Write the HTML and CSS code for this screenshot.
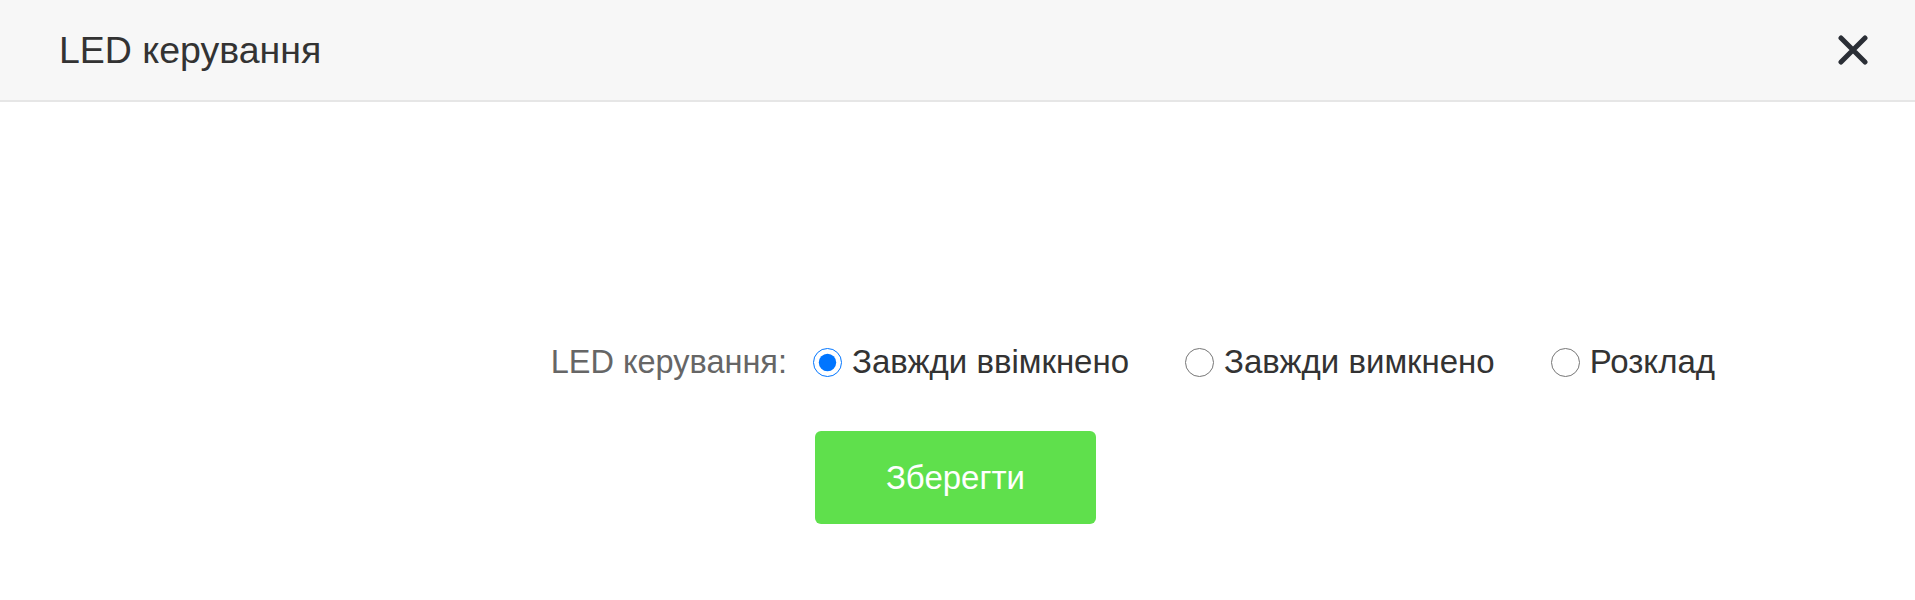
FILE: index.html
```html
<!DOCTYPE html>
<html lang="uk">
<head>
  <meta charset="UTF-8" />
  <title>LED керування</title>
  <link rel="stylesheet" href="styles.css">
</head>
<body>

  <!-- Kopfzeile des Dialogs -->
  <div class="dialog-head">
    <h2>LED керування</h2>
    <button class="close-btn" type="button" title="Закрити">
      <svg width="30" height="30" viewBox="0 0 30 30">
        <path d="M3 3 L27 27 M27 3 L3 27" stroke="#2b2f36" stroke-width="5" stroke-linecap="round" fill="none"/>
      </svg>
    </button>
  </div>

  <form class="led-form">
    <div class="form-row">
      <span class="form-label">LED керування:</span>
      <div class="options">
        <label class="option"><input type="radio" name="led" value="on" checked> Завжди ввімкнено</label>
        <label class="option"><input type="radio" name="led" value="off"> Завжди вимкнено</label>
        <label class="option"><input type="radio" name="led" value="schedule"> Розклад</label>
      </div>
    </div>

    <div class="form-row">
      <span></span>
      <button type="submit" class="save-btn">Зберегти</button>
    </div>
  </form>

</body>
</html>
```

FILE: styles.css
```css
body {
  margin: 0;
  font-family: "Liberation Sans", Arial, sans-serif;
  background: #fff;
  color: #333;
}
.dialog-head {
  height: 100px;
  display: flex;
  align-items: center;
  justify-content: space-between;
  padding: 0 47px 0 59px;
  background: #f7f7f7;
  border-bottom: 2px solid #e6e6e6;
}
.dialog-head h2 {
  margin: 0;
  font-size: 37.5px;
  font-weight: normal;
  color: #333;
}
.close-btn {
  background: none;
  border: none;
  padding: 0;
  cursor: pointer;
  display: flex;
}
.led-form {
  padding-top: 241px;
}
.form-row {
  display: grid;
  grid-template-columns: 787px auto;
  column-gap: 26px;
  align-items: center;
}
.form-label {
  text-align: right;
  font-size: 32.5px;
  color: #666;
}
.options {
  display: flex;
  align-items: center;
  gap: 56px;
}
.option {
  display: flex;
  align-items: center;
  font-size: 33px;
  color: #333;
  cursor: pointer;
}
.option input {
  width: 29px;
  height: 29px;
  margin: 0 10px 0 0;
}
.save-btn {
  margin-top: 50px;
  margin-left: 2px;
  width: 281px;
  height: 93px;
  background: #5fe04c;
  color: #fff;
  border: none;
  border-radius: 6px;
  font-family: inherit;
  font-size: 33px;
  cursor: pointer;
  justify-self: start;
}
.save-btn:hover {
  background: #52cc40;
}
```
